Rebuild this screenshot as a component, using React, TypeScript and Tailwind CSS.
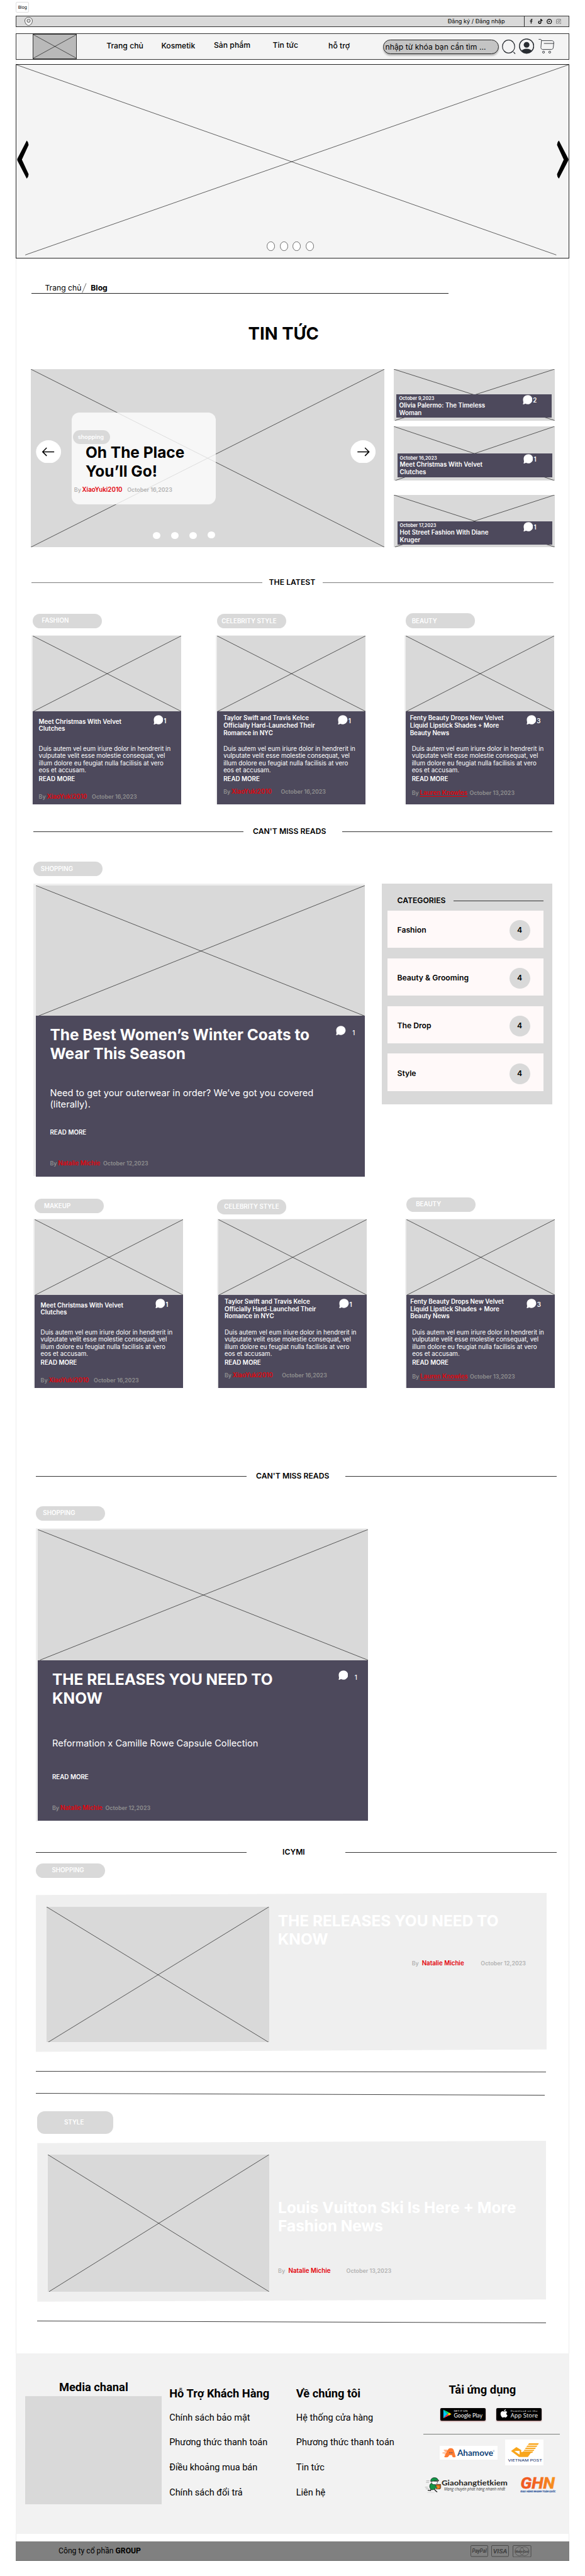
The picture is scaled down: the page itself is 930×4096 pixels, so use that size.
import React from "react";
import { FaApple, FaFacebookF, FaTiktok } from "react-icons/fa";

function Cross({ inset = 0 }: { inset?: number }) {
  return (
    <svg className="block h-full w-full" stroke="#1c1c1c" strokeWidth="0.7">
      <line x1="0" y1="0" x2="100%" y2="100%" />
      <line x1="100%" y1="0" x2={inset} y2="100%" />
    </svg>
  );
}

function Bubble() {
  return (
    <svg viewBox="0 0 26 25" className="block h-[15.2px] w-[15.4px] shrink-0" fill="#fff">
      <path d="M13.5 0C20.5 0 26 5.3 26 12S20.5 24.5 13.5 24.5C11 24.5 9 24 7 23C5 24.6 2.5 25.2 0.3 24.6C1.3 22.5 1.7 20.5 1.7 18.5C1 16.5 0.8 14.5 0.8 12C0.8 5.3 6.5 0 13.5 0Z" />
    </svg>
  );
}

type AuthorProps = {
  name: string;
  date: string;
  className?: string;
  byW?: string;
  nameW?: string;
  grey?: string;
  underline?: boolean;
};

function Author({
  name,
  date,
  className = "",
  byW = "w-[12.8px]",
  nameW = "w-[71.7px]",
  grey = "text-[#8f8f8f]",
  underline = false,
}: AuthorProps) {
  return (
    <div className={`flex items-start whitespace-nowrap text-[8.9px] leading-[12px] ${className}`}>
      <span className={`shrink-0 font-semibold ${byW} ${grey}`}>By</span>
      <span className={`shrink-0 text-[9.78px] font-semibold text-[#e3020a] ${nameW}`}>
        <span className={underline ? "underline underline-offset-2" : ""}>{name}</span>
      </span>
      <span className={`font-semibold ${grey}`}>{date}</span>
    </div>
  );
}

function Tag({ label, className = "" }: { label: string; className?: string }) {
  return (
    <div
      className={`flex h-[23.2px] w-[109.7px] shrink-0 items-center whitespace-nowrap rounded-[11.6px] bg-[#d9d9d9] text-[9.78px] font-semibold leading-[12px] text-white ${className}`}
    >
      {label}
    </div>
  );
}

type TitleProps = {
  text: string;
  className: string;
  line: string;
  textBox: string;
  color?: string;
};

function SectionTitle({ text, className, line, textBox, color = "bg-[#333]" }: TitleProps) {
  return (
    <div className={`flex h-[14.8px] shrink-0 items-center ${className}`}>
      <div className={`h-px shrink-0 ${line} ${color}`} />
      <h2 className={`shrink-0 text-[12.2px] font-semibold leading-[14.8px] text-black ${textBox}`}>{text}</h2>
      <div className={`h-px shrink-0 ${line} ${color}`} />
    </div>
  );
}

function SideCard({
  date,
  title,
  count,
  card,
  panel,
}: {
  date: string;
  title: string[];
  count: number;
  card: string;
  panel: string;
}) {
  return (
    <article className={`relative w-[255.6px] shrink-0 bg-[#d9d9d9] ${card}`}>
      <Cross inset={2} />
      <div className={`absolute flex h-[37.4px] w-[246.1px] items-start bg-[#4d495c] pl-[4px] text-white ${panel}`}>
        <div className="w-[196.5px] whitespace-nowrap pt-[2.6px]">
          <p className="text-[7.33px] font-semibold leading-[9px]">{date}</p>
          <h3 className="mt-[0.6px] text-[9.78px] font-semibold leading-[11.6px]">
            {title.map((l) => (
              <span key={l} className="block">
                {l}
              </span>
            ))}
          </h3>
        </div>
        <div className="flex pt-[1.3px]">
          <Bubble />
          <span className="ml-[1px] mt-[2.8px] text-[9.78px] font-semibold leading-[12px]">{count}</span>
        </div>
      </div>
    </article>
  );
}

const BODY = [
  "Duis autem vel eum iriure dolor in hendrerit in",
  "vulputate velit esse molestie consequat, vel",
  "illum dolore eu feugiat nulla facilisis at vero",
  "eos et accusam.",
];

type PostProps = {
  tag: string;
  tagBox: string;
  head: string;
  title: string[];
  titleBox: string;
  count: number;
  author: AuthorProps;
  column: string;
  pad?: string;
};

function Post({ tag, tagBox, head, title, titleBox, count, author, column, pad = "pl-[9.4px]" }: PostProps) {
  return (
    <div className={`flex w-[236.2px] shrink-0 flex-col ${column}`}>
      <div className={head}>
        <Tag label={tag} className={tagBox} />
      </div>
      <article className="-ml-[2px] border-l-2 border-t border-[#efefef]">
        <div className="h-[120.2px] bg-[#d9d9d9]">
          <Cross inset={1} />
        </div>
        <div className={`h-[148px] bg-[#4d495c] text-white ${pad}`}>
          <div className="flex h-[53.6px]">
            <h3 className={`w-[182.2px] whitespace-nowrap text-[9.78px] font-semibold leading-[11.7px] ${titleBox}`}>
              {title.map((l) => (
                <span key={l} className="block">
                  {l}
                </span>
              ))}
            </h3>
            <div className="flex pt-[6.3px]">
              <Bubble />
              <span className="ml-[1px] mt-[3.5px] text-[9.78px] font-semibold leading-[12px]">{count}</span>
            </div>
          </div>
          <p className="whitespace-nowrap text-[9.78px] leading-[11.6px]">
            {BODY.map((l) => (
              <span key={l} className="block">
                {l}
              </span>
            ))}
          </p>
          <p className="mt-[2.3px] text-[9.78px] font-semibold leading-[12px]">READ MORE</p>
          <Author {...author} />
        </div>
      </article>
    </div>
  );
}

function BigPost({
  title,
  body,
  bodyPad,
  className,
}: {
  title: string[];
  body: string[];
  bodyPad: string;
  className: string;
}) {
  return (
    <article className={`shrink-0 bg-[#efefef] pl-[3.5px] pt-[2.2px] ${className}`}>
      <div className="h-[207.7px] bg-[#d9d9d9]">
        <Cross inset={3.5} />
      </div>
      <div className="h-[255.4px] bg-[#4d495c] pl-[22.6px] pt-[16.2px] text-white">
        <div className="flex h-[58.8px] whitespace-nowrap">
          <h3 className="w-[454.9px] text-[24.44px] font-bold leading-[29.4px]">
            {title.map((l) => (
              <span key={l} className="block">
                {l}
              </span>
            ))}
          </h3>
          <Bubble />
          <span className="ml-[10.5px] mt-[5.6px] text-[9.78px] font-medium leading-[12px]">1</span>
        </div>
        <p className={`h-[105.2px] whitespace-nowrap text-[14.67px] leading-[17.8px] ${bodyPad}`}>
          {body.map((l) => (
            <span key={l} className="block">
              {l}
            </span>
          ))}
        </p>
        <p className="text-[9.78px] font-semibold leading-[12px]">READ MORE</p>
        <Author name="Natalie Michie" date="October 12,2023" className="mt-[36.6px]" />
      </div>
    </article>
  );
}

function SlantLine({ className, drop }: { className: string; drop: number }) {
  return (
    <svg className={`block h-[4px] shrink-0 ${className}`} stroke="#111" strokeWidth="0.8">
      <line x1="0" y1="0.5" x2="100%" y2={0.5 + drop} />
    </svg>
  );
}

function TopBar() {
  return (
    <div className="flex h-[18.3px] shrink-0 items-center border border-[#333] bg-[#d9d9d9] pl-[13px]">
      <svg viewBox="0 0 13 14" className="h-[14px] w-[13px]" fill="#f2f2f2" stroke="#222" strokeWidth="0.7">
        <path d="M6.5 0.5C9.8 0.5 12.5 3 12.5 6C12.5 9.5 9.5 13.5 6.5 13.5S0.5 9.5 0.5 6C0.5 3 3.2 0.5 6.5 0.5Z" />
        <ellipse cx="6.5" cy="6" rx="2.6" ry="2.6" fill="#d9d9d9" />
      </svg>
      <span className="ml-auto w-[120.8px] whitespace-nowrap text-[9.17px] leading-[12px] text-black">
        Đăng ký / Đăng nhập
      </span>
      <div className="flex h-full w-[71.5px] items-center border-l border-[#333] pl-[3.5px] text-black">
        <span className="flex w-[14.6px] justify-center">
          <FaFacebookF className="h-[7.5px] w-[7px] text-[#222]" />
        </span>
        <span className="flex w-[14.6px] justify-center">
          <FaTiktok className="h-[8px] w-[8px]" />
        </span>
        <span className="flex w-[14.6px] justify-center">
          <svg viewBox="0 0 14 14" className="h-[8.5px] w-[8.5px]" fill="none" stroke="#000" strokeWidth="2">
            <circle cx="7" cy="7" r="5.8" />
            <path d="M5.5 4.5L9.5 7L5.5 9.5Z" fill="#000" stroke="none" />
          </svg>
        </span>
        <span className="flex w-[14.6px] justify-center">
          <svg viewBox="0 0 14 14" className="h-[8.5px] w-[8.5px]" fill="none" stroke="#555" strokeWidth="1.2">
            <rect x="0.8" y="0.8" width="12.4" height="12.4" rx="3.5" />
            <circle cx="7" cy="7" r="2.5" />
            <circle cx="10.5" cy="3.5" r="0.4" />
          </svg>
        </span>
      </div>
    </div>
  );
}

function Header() {
  return (
    <header className="mt-[9.6px] flex h-[42px] shrink-0 items-start border border-[#333] bg-[#f4f4f4] text-black">
      <div className="ml-[25.6px] mt-[0.5px] h-[39.6px] w-[70.6px] shrink-0 border border-[#333] bg-[#b9b9b9]">
        <Cross />
      </div>
      <nav className="ml-[47px] flex whitespace-nowrap pt-[12.2px] text-[12.2px] font-medium leading-[14.8px]">
        <a className="w-[87.2px]">Trang chủ</a>
        <a className="w-[83.6px]">Kosmetik</a>
        <a className="-mt-[0.6px] w-[93.6px]">Sản phẩm</a>
        <a className="-mt-[0.6px] w-[88.5px]">Tin tức</a>
        <a className="w-[86.5px]">hỗ trợ</a>
      </nav>
      <div className="mt-[9.7px] flex h-[23px] w-[184px] shrink-0 items-center whitespace-nowrap rounded-[11.5px] border border-[#222] bg-[#c4c4c4] pl-[3px] pt-[1px] text-[12.2px] leading-[14.8px] shadow-[0_2.5px_2.5px_rgba(0,0,0,0.25)]">
        nhập từ khóa bạn cần tìm ...
      </div>
      <svg
        viewBox="0 0 24 25"
        className="ml-[4px] mt-[8.8px] h-[25px] w-[24px] shrink-0"
        fill="none"
        stroke="#292d32"
        strokeWidth="1.2"
      >
        <ellipse cx="11.5" cy="12" rx="9.8" ry="10.3" />
        <path d="M19.3 20.6L22 23.6" strokeWidth="1.4" />
      </svg>
      <svg viewBox="0 0 24 24" className="ml-[4.3px] mt-[7.6px] h-[24.6px] w-[24.3px] shrink-0">
        <circle cx="12" cy="12" r="11.2" fill="none" stroke="#292d32" strokeWidth="1.5" />
        <circle cx="12" cy="10" r="4.5" fill="#292d32" />
        <path
          d="M3.8 19.5C5.2 17.5 8.3 16.2 12 16.2S18.8 17.5 20.2 19.5C18.2 21.8 15.3 23.2 12 23.2S5.8 21.8 3.8 19.5Z"
          fill="#292d32"
        />
      </svg>
      <svg
        viewBox="0 0 25 23"
        className="ml-[6.6px] mt-[8.8px] h-[23px] w-[25px] shrink-0"
        fill="none"
        stroke="#292d32"
        strokeWidth="0.9"
      >
        <path d="M0.3 0.5H3C4.2 0.5 4.9 1.4 4.8 2.5L3.9 13.5C3.8 15.2 5 16.6 6.7 16.6H20.6C22.1 16.6 23.4 15.4 23.5 13.9L24.4 6C24.5 4 23.2 2.6 21.3 2.6H4.9" />
        <path d="M8.7 7.1H24.2" />
        <circle cx="8.1" cy="20.9" r="1.6" />
        <circle cx="17.9" cy="20.9" r="1.6" />
      </svg>
    </header>
  );
}

function Hero() {
  return (
    <section className="relative mt-[7.6px] h-[308.9px] shrink-0 border border-[#222] bg-[#f4f4f4]">
      <svg viewBox="0 0 878 307" className="block h-full w-full" fill="none" stroke="#1c1c1c" strokeWidth="0.7">
        <path d="M0 0L858.5 302.5M878 0L14 302.5" />
      </svg>
      <svg viewBox="0 0 19 61" className="absolute left-[1px] top-[120px] h-[61.5px] w-[19px]">
        <path d="M15.5 0.3L0.6 29Q0.1 30.5 0.6 32L15.5 60.8Q18.7 58 18.4 53.5L7.8 30.5L18.4 7.5Q18.7 3 15.5 0.3Z" />
      </svg>
      <svg viewBox="0 0 19 61" className="absolute right-0 top-[120px] h-[61.5px] w-[19px]">
        <path d="M3.5 0.3L18.4 29Q18.9 30.5 18.4 32L3.5 60.8Q0.3 58 0.6 53.5L11.2 30.5L0.6 7.5Q0.3 3 3.5 0.3Z" />
      </svg>
      <div className="absolute left-[398px] top-[280.6px] flex gap-[7.6px]">
        {[0, 1, 2, 3].map((i) => (
          <svg key={i} viewBox="0 0 13 15" className="h-[15px] w-[13.1px]" fill="#fff" stroke="#333" strokeWidth="0.7">
            <ellipse cx="6.5" cy="7.5" rx="6" ry="7.1" />
          </svg>
        ))}
      </div>
    </section>
  );
}

function Arrow({ flip = false, className }: { flip?: boolean; className: string }) {
  return (
    <svg viewBox="0 0 40 37" className={`absolute h-[36.8px] w-[40.4px] ${className}`}>
      <ellipse cx="20" cy="18.5" rx="20" ry="18.5" fill="#fff" />
      <path
        d="M29 18.5H11M17 12L10.5 18.5L17 25"
        fill="none"
        stroke="#000"
        strokeWidth="1.5"
        transform={flip ? "rotate(180 20 18.5)" : undefined}
      />
    </svg>
  );
}

function Featured() {
  return (
    <section className="mt-[40px] flex h-[283.1px] shrink-0 gap-[15.4px] pl-[23.6px]">
      <div className="relative w-[562.3px] shrink-0 bg-[#d9d9d9]">
        <Cross />
        <div className="absolute left-[65.9px] top-[69.3px] flex h-[145.4px] w-[228.9px] flex-col whitespace-nowrap rounded-[12px] bg-white/80">
          <div className="ml-[1.7px] mt-[27.4px] flex h-[22.5px] w-[58.8px] items-center rounded-[11px] bg-[#d9d9d9] pl-[7.5px] text-[9.17px] font-semibold leading-[12px] text-white">
            shopping
          </div>
          <h3 className="-mt-[0.8px] pl-[21.5px] text-[24.44px] font-bold leading-[29.5px] text-black">
            Oh The Place
            <br />
            You’ll Go!
          </h3>
          <Author
            name="XiaoYuki2010"
            date="October 16,2023"
            className="ml-[3.3px] mt-[8.2px]"
            grey="text-[#b3b3b3]"
          />
        </div>
        <Arrow className="left-[8.9px] top-[112.5px]" />
        <Arrow flip className="left-[508.3px] top-[112.5px]" />
        <div className="absolute left-[194px] top-[259.4px] flex gap-[17.3px]">
          <span className="h-[11px] w-[12px] rounded-[50%] bg-white" />
          <span className="h-[11px] w-[12px] rounded-[50%] bg-white" />
          <span className="h-[11px] w-[12px] rounded-[50%] bg-white" />
          <span className="-mt-[1.2px] h-[11px] w-[12px] rounded-[50%] bg-white" />
        </div>
      </div>
      <div className="flex flex-col">
        <SideCard
          date="October 9,2023"
          title={["Olivia Palermo: The Timeless", "Woman"]}
          count={2}
          card="h-[81.5px]"
          panel="left-[4.2px] top-[39.8px]"
        />
        <SideCard
          date="October 16,2023"
          title={["Meet Christmas With Velvet", "Clutches"]}
          count={1}
          card="mt-[9.4px] h-[86.1px]"
          panel="left-[5.3px] top-[43.2px]"
        />
        <SideCard
          date="October 17,2023"
          title={["Hot Street Fashion With Diane", "Kruger"]}
          count={1}
          card="mt-[23.4px] h-[82.7px]"
          panel="left-[5.3px] top-[41.3px]"
        />
      </div>
    </section>
  );
}

const TAYLOR = ["Taylor Swift and Travis Kelce", "Officially Hard-Launched Their", "Romance in NYC"];
const FENTY = ["Fenty Beauty Drops New Velvet", "Liquid Lipstick Shades + More", "Beauty News"];
const MEET = ["Meet Christmas With Velvet", "Clutches"];

const AUTHOR_A: AuthorProps = { name: "XiaoYuki2010", date: "October 16,2023", className: "mt-[16.1px]" };
const AUTHOR_B: AuthorProps = {
  name: "XiaoYuki2010",
  date: "October 16,2023",
  className: "mt-[7.3px]",
  nameW: "w-[78.5px]",
};
const AUTHOR_C: AuthorProps = {
  name: "Lauren Knowles",
  date: "October 13,2023",
  className: "mt-[10.1px]",
  nameW: "w-[79px]",
  underline: true,
};

function Categories() {
  return (
    <aside className="ml-[27.2px] h-[350.2px] w-[270.5px] shrink-0 bg-[#d9d9d9] pl-[8.9px] pt-[19.3px] text-[12.2px] font-semibold leading-[14.8px] text-black">
      <div className="flex items-center">
        <h2 className="w-[105px] pl-[15.3px]">CATEGORIES</h2>
        <div className="h-px w-[142.9px] bg-[#333]" />
      </div>
      <ul className="mt-[8.6px] flex flex-col gap-[16.4px]">
        {["Fashion", "Beauty & Grooming", "The Drop", "Style"].map((c) => (
          <li
            key={c}
            className="flex h-[59.4px] w-[247.9px] items-center justify-between bg-[#fff9f9] pl-[15.3px] pr-[21.3px] pt-[4px]"
          >
            <span>{c}</span>
            <span className="flex h-[33.2px] w-[33.2px] items-center justify-center rounded-full bg-[#d9d9d9]">4</span>
          </li>
        ))}
      </ul>
    </aside>
  );
}

function GooglePlay() {
  return (
    <svg
      viewBox="0 0 352 98"
      className="h-[20px] w-[71.7px] rounded-[2px] bg-black shadow-[0_1px_2px_rgba(120,0,0,0.5)]"
    >
      <path d="M24 12L56 46L24 80Z" fill="#00c8ff" />
      <path d="M24 12L70 36L56 46Z" fill="#00e676" />
      <path d="M24 80L70 56L56 46Z" fill="#ff3a44" />
      <path d="M70 35L87 46L70 57L55 46Z" fill="#ffd000" />
      <text x="106" y="28" fontSize="21" textLength="106" fill="#fff" fontFamily="Lato, sans-serif">
        GET IT ON
      </text>
      <text
        x="106"
        y="73"
        fontSize="42"
        textLength="223"
        lengthAdjust="spacingAndGlyphs"
        fill="#fff"
        fontFamily="Lato, sans-serif"
      >
        Google Play
      </text>
    </svg>
  );
}

function AppStore() {
  return (
    <div className="relative h-[20px] w-[72.2px]">
      <svg viewBox="0 0 354 98" className="h-full w-full rounded-[2px] bg-black shadow-[0_1px_2px_rgba(120,0,0,0.5)]">
        <text x="112" y="27" fontSize="21" textLength="209" fill="#fff" fontFamily="Open Sans, sans-serif">
          Download on the
        </text>
        <text
          x="112"
          y="75"
          fontSize="45"
          textLength="212"
          lengthAdjust="spacingAndGlyphs"
          fill="#fff"
          fontFamily="Open Sans, sans-serif"
        >
          App Store
        </text>
      </svg>
      <FaApple className="absolute left-[6px] top-[1px] h-[15px] w-[12.5px] text-white" />
    </div>
  );
}

function Ahamove() {
  return (
    <svg viewBox="0 0 450 108" className="mt-[9.8px] h-[22px] w-[91.7px] bg-white">
      <path
        d="M62 37C64 24 76 17 88 19C100 19 108 26 111 38L124 82Q125 89 119 89H106Q100 89 98 82L96 72H76L68 84Q64 90 56 89H40Q34 88 37 81L46 68H38V62H48L50 58H22V53H52L55 46H38V41H57L59 37H32V32H60Z"
        fill="#ff7b31"
      />
      <circle cx="80" cy="54" r="4" fill="#10447a" />
      <circle cx="95" cy="54" r="4" fill="#10447a" />
      <text
        x="137"
        y="78"
        fontSize="62"
        fontWeight="700"
        textLength="280"
        lengthAdjust="spacingAndGlyphs"
        fill="#10447a"
        fontFamily="Lato, sans-serif"
      >
        Ahamove
      </text>
      <text x="415" y="48" fontSize="16" fill="#10447a" fontFamily="Lato, sans-serif">
        ®
      </text>
    </svg>
  );
}

function VietnamPost() {
  return (
    <svg viewBox="0 0 301 204" className="h-[41.5px] w-[61.3px] bg-white">
      <g fill="#f9a61c">
        <path d="M46 90L88 59L126 82V98H205L178 136H108ZM72 90L113 118V88Z" fillRule="evenodd" />
        <path d="M187 30H263L256 42H177Z" />
        <path d="M173 48H252L245 58H165Z" />
        <path d="M162 64H240L234 74H154Z" />
        <path d="M151 80H229L222 90H144Z" />
        <path d="M138 94H218L212 104H132Z" />
      </g>
      <text
        x="22"
        y="171"
        fontSize="24"
        fontWeight="500"
        textLength="267"
        lengthAdjust="spacingAndGlyphs"
        fill="#2b3f77"
        fontFamily="Inter, sans-serif"
      >
        VIETNAM POST
      </text>
    </svg>
  );
}

function Ghtk() {
  return (
    <svg viewBox="0 0 672 130" className="h-[26.4px] w-[136.9px] shrink-0">
      <g stroke="#555" strokeWidth="2">
        <path d="M12 28H38M10 40H34M2 78H24M8 90H32" />
      </g>
      <path d="M20 119H76" stroke="#d5d5d5" strokeWidth="4" />
      <path
        d="M50 90L46 104L26 102M76 90L82 104L96 114"
        fill="none"
        stroke="#111"
        strokeWidth="6"
        strokeLinecap="round"
      />
      <path
        d="M38 70C38 54 48 46 62 46C78 46 86 58 86 72C86 88 76 98 62 98C46 98 38 86 38 70Z"
        fill="#159447"
        stroke="#111"
        strokeWidth="3"
      />
      <ellipse cx="76" cy="40" rx="23" ry="17" fill="#fff" stroke="#111" strokeWidth="3" />
      <path
        d="M46 32C46 14 58 3 76 3C92 3 102 10 104 22L110 26L84 30Z"
        fill="#159447"
        stroke="#111"
        strokeWidth="3"
      />
      <path d="M74 30L110 22L104 34Z" fill="#777" stroke="#111" strokeWidth="2" />
      <path d="M88 62L96 56H125V86L117 92H88Z" fill="#f58220" stroke="#111" strokeWidth="3" />
      <path d="M88 62H117V92M117 62L125 56" fill="none" stroke="#111" strokeWidth="2" />
      <path d="M56 66L84 80L98 78" fill="none" stroke="#159447" strokeWidth="9" />
      <text
        x="132"
        y="64"
        fontSize="56"
        fontWeight="700"
        textLength="517"
        lengthAdjust="spacingAndGlyphs"
        fill="#231f20"
        fontFamily="Lato, sans-serif"
      >
        Giaohangtietkiem
      </text>
      <text
        x="152"
        y="104"
        fontSize="31"
        fontStyle="italic"
        textLength="478"
        lengthAdjust="spacingAndGlyphs"
        fill="#333"
        fontFamily="Open Sans, sans-serif"
      >
        Mạng chuyển phát hàng nhanh nhất
      </text>
    </svg>
  );
}

function Ghn() {
  return (
    <svg viewBox="0 -30 300 160" className="-mt-[6.1px] ml-[14.8px] h-[32.6px] w-[61.1px] shrink-0">
      <defs>
        <linearGradient id="ghn" x1="0" x2="1">
          <stop offset="0.3" stopColor="#f15a22" />
          <stop offset="1" stopColor="#f7941d" />
        </linearGradient>
      </defs>
      <text
        x="2"
        y="88"
        fontSize="122"
        fontWeight="700"
        fontStyle="italic"
        textLength="268"
        lengthAdjust="spacingAndGlyphs"
        fill="url(#ghn)"
        stroke="url(#ghn)"
        strokeWidth="3"
        fontFamily="Roboto, sans-serif"
      >
        GHN
      </text>
      <text
        x="1"
        y="115"
        fontSize="18"
        fontWeight="700"
        fontStyle="italic"
        textLength="275"
        lengthAdjust="spacingAndGlyphs"
        fill="#1f4e96"
        stroke="#1f4e96"
        strokeWidth="0.6"
        fontFamily="Roboto, sans-serif"
      >
        GIAO HÀNG NHANH TOÀN QUỐC
      </text>
    </svg>
  );
}

function FooterLinks({ title, items, className }: { title: string; items: string[]; className: string }) {
  return (
    <div className={`shrink-0 whitespace-nowrap pt-[53.3px] ${className}`}>
      <h3 className="text-[18.3px] font-bold leading-[22px]">{title}</h3>
      <ul className="mt-[18.6px] flex flex-col gap-[21.7px] text-[14.5px] leading-[18px]">
        {items.map((i) => (
          <li key={i}>{i}</li>
        ))}
      </ul>
    </div>
  );
}

function Footer() {
  return (
    <footer className="mt-[47.7px] shrink-0 font-[Roboto,sans-serif] text-black">
      <div className="flex h-[287.3px] bg-[#f2f2f2]">
        <div className="ml-[15.3px] w-[217.1px] shrink-0 pt-[43.6px]">
          <h3 className="text-center text-[18.3px] font-bold leading-[22px]">Media chanal</h3>
          <div className="mt-[2.7px] h-[171.9px] bg-[#d9d9d9]" />
        </div>
        <FooterLinks
          className="ml-[11.8px] w-[201.6px]"
          title="Hỗ Trợ Khách Hàng"
          items={["Chính sách bảo mật", "Phương thức thanh toán", "Điều khoảng mua bán", "Chính sách đổi trả"]}
        />
        <FooterLinks
          className="w-[202px]"
          title="Về chúng tôi"
          items={["Hệ thống cửa hàng", "Phương thức thanh toán", "Tin tức", "Liên hệ"]}
        />
        <div className="w-[217px] shrink-0 pt-[47.7px]">
          <h3 className="pl-[40.6px] text-[18.3px] font-bold leading-[22px]">Tải ứng dụng</h3>
          <div className="ml-[27.7px] mt-[18px] flex gap-[16.7px]">
            <GooglePlay />
            <AppStore />
          </div>
          <div className="mt-[20.9px] h-[1.2px] bg-[#7b7e7b]" />
          <div className="ml-[26.1px] mt-[7.4px] flex items-start gap-[12px]">
            <Ahamove />
            <VietnamPost />
          </div>
          <div className="ml-[2.5px] mt-[18.4px] flex items-start">
            <Ghtk />
            <Ghn />
          </div>
        </div>
      </div>
      <div className="mt-[12.1px] flex h-[30.6px] items-center bg-[#808080] pl-[68px] text-[12.2px] shadow-[inset_0_-1px_#6f6f6f]">
        <span>
          Công ty cổ phần <b>GROUP</b>
        </span>
        <div className="ml-auto mr-[60.5px] flex items-center gap-[5.5px]">
          <svg viewBox="0 0 47 31" className="h-[18.5px] w-[28px]">
            <rect x="0.8" y="0.8" width="45.4" height="29.4" rx="2.5" fill="none" stroke="#404040" strokeWidth="1.4" />
            <text
              x="4"
              y="20"
              fontSize="14"
              fontWeight="700"
              fontStyle="italic"
              textLength="39"
              lengthAdjust="spacingAndGlyphs"
              fill="#404040"
            >
              PayPal
            </text>
          </svg>
          <svg viewBox="0 0 47 31" className="h-[18.5px] w-[28px]">
            <rect x="0.8" y="0.8" width="45.4" height="29.4" rx="2.5" fill="none" stroke="#404040" strokeWidth="1.4" />
            <text
              x="4.5"
              y="21"
              fontSize="16"
              fontWeight="700"
              fontStyle="italic"
              textLength="38"
              lengthAdjust="spacingAndGlyphs"
              fill="#404040"
            >
              VISA
            </text>
          </svg>
          <svg viewBox="0 0 49 32" className="h-[19.4px] w-[29.6px]" fill="none" stroke="#404040">
            <rect x="0.8" y="0.8" width="47.4" height="30.4" rx="2.5" strokeWidth="1.4" />
            <circle cx="18" cy="16" r="12" />
            <circle cx="31" cy="16" r="12" />
            <text
              x="7"
              y="19"
              fontSize="8.5"
              fontWeight="700"
              fontStyle="italic"
              textLength="35"
              lengthAdjust="spacingAndGlyphs"
              fill="#404040"
              stroke="none"
            >
              MasterCard
            </text>
          </svg>
        </div>
      </div>
    </footer>
  );
}

export default function App() {
  return (
    <div className="h-[4096px] w-[930px] overflow-hidden bg-white pl-[25px] font-[Inter,sans-serif] [font-optical-sizing:none]">
      <div className="h-[24.8px] pt-[2.7px]">
        <div className="flex h-[17.8px] w-[21.4px] items-center justify-center rounded-[2px] border border-[#dedede] text-[6.7px] leading-[8px] text-black">
          Blog
        </div>
      </div>
      <div className="flex w-[880px] flex-col shadow-[inset_1px_0_#ececec,inset_-1px_0_#ececec]">
        <TopBar />
        <Header />
        <Hero />

        <div className="ml-[24.8px] mt-[40.2px] flex h-[15.4px] w-[663px] shrink-0 whitespace-nowrap border-b border-[#222] pl-[21.6px] text-[12.2px] leading-[14.8px] text-black">
          <span className="w-[59px]">Trang chủ</span>
          <svg viewBox="0 0 8 17" className="-mt-[1px] h-[16px] w-[8px] shrink-0" stroke="#222" strokeWidth="0.7">
            <line x1="7.2" y1="0.5" x2="0.5" y2="16.5" />
          </svg>
          <span className="ml-[5.9px] font-bold">Blog</span>
        </div>

        <h1 className="mt-[47px] shrink-0 pl-[369.6px] text-[27.5px] font-bold leading-[33.3px] text-black">TIN TỨC</h1>

        <Featured />

        <SectionTitle
          text="THE LATEST"
          className="mt-[48.7px] pl-[24.8px]"
          line="w-[367.2px]"
          textBox="w-[96px] pl-[10.6px]"
          color="bg-[#7c7c7c]"
        />

        <div className="mt-[41.8px] flex shrink-0">
          <Post
            column="ml-[27.2px]"
            head="h-[34.5px] pt-[0.6px]"
            tag="FASHION"
            tagBox="pl-[14.2px] pb-[1px] text-[9.17px]"
            title={MEET}
            titleBox="pt-[10.5px]"
            count={1}
            author={AUTHOR_A}
          />
          <Post
            column="ml-[56.8px]"
            head="h-[34.5px] pt-[0.6px]"
            tag="CELEBRITY STYLE"
            tagBox="pl-[7.2px]"
            title={TAYLOR}
            titleBox="pt-[5px]"
            count={1}
            author={AUTHOR_B}
            pad="pl-[10px]"
          />
          <Post
            column="ml-[63.9px]"
            head="h-[34.5px]"
            tag="BEAUTY"
            tagBox="pl-[9.4px] pt-[2px]"
            title={FENTY}
            titleBox="pt-[5px] -ml-[3px] mr-[3px]"
            count={3}
            author={AUTHOR_C}
          />
        </div>

        <SectionTitle
          text="CAN'T MISS READS"
          className="mt-[36px] pl-[28.4px]"
          line="w-[333.9px]"
          textBox="w-[156.6px] pl-[14.8px]"
        />

        <Tag label="SHOPPING" className="ml-[28.4px] mt-[40px] pl-[11.4px]" />
        <div className="mt-[12.3px] flex shrink-0 pl-[28.4px]">
          <BigPost
            className="h-[465.1px] w-[526.7px]"
            title={["The Best Women’s Winter Coats to", "Wear This Season"]}
            body={["Need to get your outerwear in order? We’ve got you covered", "(literally)."]}
            bodyPad="pt-[39.7px]"
          />
          <Categories />
        </div>

        <div className="mt-[33.1px] flex shrink-0">
          <Post
            column="ml-[30.2px]"
            head="h-[34.3px] pt-[2.4px]"
            tag="MAKEUP"
            tagBox="pl-[14.7px] pt-[1px]"
            title={MEET}
            titleBox="pt-[10.5px]"
            count={1}
            author={AUTHOR_A}
          />
          <Post
            column="ml-[55.6px]"
            head="h-[34.3px] pt-[3.8px]"
            tag="CELEBRITY STYLE"
            tagBox="-ml-[1.8px] pl-[11.2px]"
            title={TAYLOR}
            titleBox="pt-[5px]"
            count={1}
            author={AUTHOR_B}
            pad="pl-[10px]"
          />
          <Post
            column="ml-[62.7px]"
            head="h-[34.3px]"
            tag="BEAUTY"
            tagBox="pl-[15.3px]"
            title={FENTY}
            titleBox="pt-[5px] -ml-[3px] mr-[3px]"
            count={3}
            author={AUTHOR_C}
          />
        </div>

        <SectionTitle
          text="CAN'T MISS READS"
          className="mt-[132.7px] pl-[31.9px]"
          line="w-[335.4px]"
          textBox="w-[157px] pl-[14.8px]"
        />
        <Tag label="SHOPPING" className="ml-[31.9px] mt-[40.3px] pl-[11.4px]" />
        <BigPost
          className="ml-[31.9px] mt-[12.2px] h-[465.3px] w-[528.5px]"
          title={["THE RELEASES YOU NEED TO", "KNOW"]}
          body={["Reformation x Camille Rowe Capsule Collection"]}
          bodyPad="pt-[48.7px]"
        />

        <SectionTitle
          text="ICYMI"
          className="mt-[42.8px] pl-[31.9px]"
          line="w-[335.4px]"
          textBox="w-[157px] pl-[56.8px]"
        />
        <Tag label="SHOPPING" className="ml-[31.9px] mt-[9.6px] pl-[25.6px]" />

        <article className="ml-[31.9px] mt-[23.7px] flex h-[253px] w-[812.6px] shrink-0 bg-[#efefef] pl-[17.2px] [clip-path:polygon(0_3.6px,100%_0,100%_249.2px,0_100%)]">
          <div className="mt-[22.1px] h-[215.6px] w-[353.5px] shrink-0 bg-[#d9d9d9]">
            <Cross inset={2} />
          </div>
          <div className="whitespace-nowrap pl-[14.2px] pt-[30.6px]">
            <h3 className="text-[24.44px] font-bold leading-[29.3px] text-white">
              THE RELEASES YOU NEED TO
              <br />
              KNOW
            </h3>
            <Author
              name="Natalie Michie"
              date="October 12,2023"
              className="ml-[212.9px] mt-[17.5px]"
              byW="w-[16px]"
              nameW="w-[93.7px]"
              grey="text-[#b3b3b3]"
            />
          </div>
        </article>

        <SlantLine className="ml-[31.9px] mt-[30.3px] w-[811.4px]" drop={1.1} />
        <SlantLine className="ml-[31.9px] mt-[30.9px] w-[809px]" drop={3} />

        <div className="ml-[34.3px] mt-[25px] flex h-[36.5px] w-[120.4px] shrink-0 items-center rounded-[12px] bg-[#d9d9d9] pl-[42.7px] text-[9.78px] font-semibold leading-[12px] text-white">
          STYLE
        </div>

        <article className="ml-[34.3px] mt-[10.7px] flex h-[255.9px] w-[809px] shrink-0 bg-[#efefef] pl-[17.2px] [clip-path:polygon(0_3.7px,100%_0,100%_252.2px,0_100%)]">
          <div className="mt-[22.4px] h-[217.8px] w-[351.7px] shrink-0 bg-[#d9d9d9]">
            <Cross inset={2} />
          </div>
          <div className="whitespace-nowrap pl-[13.9px] pt-[91.8px]">
            <h3 className="text-[24.44px] font-bold leading-[29.4px] text-white">
              Louis Vuitton Ski Is Here + More
              <br />
              Fashion News
            </h3>
            <Author
              name="Natalie Michie"
              date="October 13,2023"
              className="mt-[50px]"
              byW="w-[16.5px]"
              nameW="w-[92px]"
              grey="text-[#b3b3b3]"
            />
          </div>
        </article>

        <SlantLine className="ml-[34.3px] mt-[30.2px] w-[809px]" drop={3} />

        <Footer />
      </div>
    </div>
  );
}
